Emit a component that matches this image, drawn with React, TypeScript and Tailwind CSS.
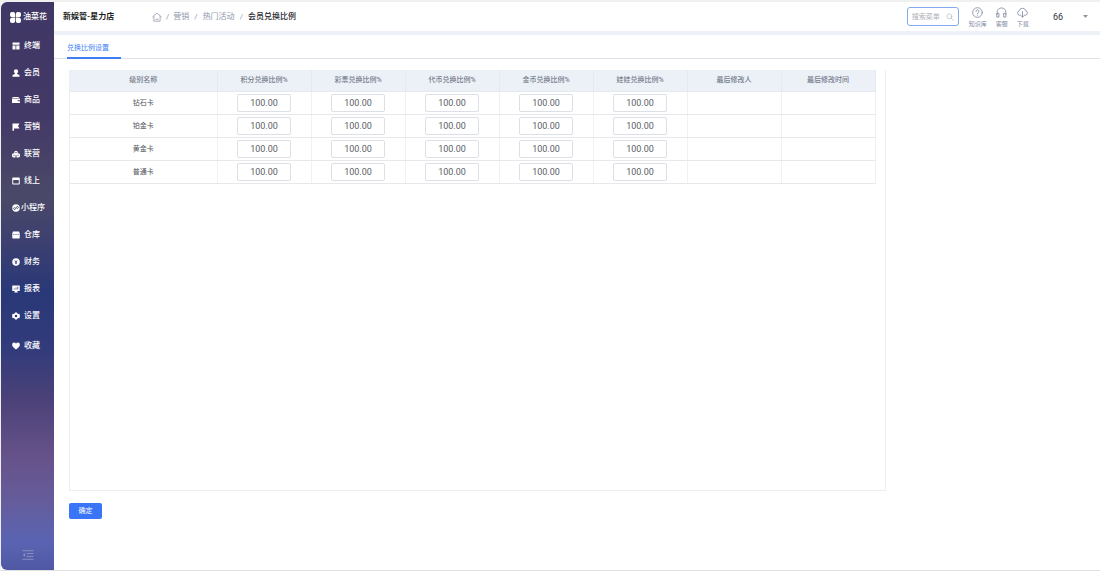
import React, { useState } from "react";

type IconProps = { className?: string };

const solid = (children: React.ReactNode) =>
  function SolidIcon({ className = "size-2 shrink-0" }: IconProps) {
    return (
      <svg viewBox="0 0 16 16" fill="currentColor" className={className} aria-hidden="true">
        {children}
      </svg>
    );
  };

const TerminalIcon = solid(<path d="M1 1h14v4.500H1zM1 7h6v8H1zM8.500 7H15v8H8.500z" />);
const MemberIcon = solid(
  <path d="M8 .5a4.200 4.200 0 0 1 4.200 4.200c0 1.800-.9 3.200-2 4v1.200L15 12v3.500H1V12l4.800-2.100V8.700c-1.100-.8-2-2.200-2-4A4.200 4.200 0 0 1 8 .5z" />
);
const GoodsIcon = solid(
  <path fillRule="evenodd" d="M1 2h12.500v2H1zM0 5h16v3h-4.500v2.500H16V14H0zM13 8.800h2v1h-2z" />
);
const FlagIcon = solid(<path d="M1 1h14l-3 5 3 5H4v4.500H1z" />);
const AllianceIcon = solid(
  <path fillRule="evenodd" d="M4.500 5a3.500 3.500 0 0 1 7 0v1.500h.5a4 4 0 0 1 0 8.500H9v-4.500H7V15H4a4 4 0 0 1 0-8.500h.5zM7 4v2.500h2V4zM3 9.500v2h2v-2zM11 9.500v2h2v-2z" />
);
const OnlineIcon = solid(
  <path fillRule="evenodd" d="M2 1h12a1.500 1.500 0 0 1 1.500 1.500v11A1.500 1.500 0 0 1 14 15H2a1.500 1.500 0 0 1-1.500-1.500v-11A1.500 1.500 0 0 1 2 1zM2.500 6v7h11V6z" />
);
const MiniAppIcon = solid(
  <>
    <circle cx="8" cy="8" r="7.500" />
    <path d="M6.500 8.300a2 2 0 1 0 1.500 2V5.700a2 2 0 1 1 1.500 2" fill="none" stroke="#4a4668" strokeWidth="1.500" transform="rotate(25 8 8)" />
  </>
);
const WarehouseIcon = solid(
  <path fillRule="evenodd" d="M2 1h12l1.500 4v8.500A1.500 1.500 0 0 1 14 15H2a1.500 1.500 0 0 1-1.500-1.500V5zM2.500 6v1.500H5V6zM6.800 6v1.500h2.400V6zM11 6v1.500h2.500V6z" />
);
const FinanceIcon = solid(
  <>
    <circle cx="8" cy="8" r="7.500" />
    <path d="m5.500 4.500 2.500 3 2.500-3M8 7.500V12M5.700 8h4.600M5.700 10h4.600" fill="none" stroke="#2f3876" strokeWidth="1.400" />
  </>
);
const ReportIcon = solid(
  <>
    <path d="M.5 1h15v11H10l2 3H4l2-3H.5z" />
    <path d="M4.500 9V7M8 9V5M11.500 9V3.500" stroke="#2a3878" strokeWidth="1.500" />
  </>
);
const SettingIcon = solid(
  <path fillRule="evenodd" d="M6 .8h4l.7 2 1.800 1 2.100-.4 1.400 3.500-1.100 1.100 1.100 1.200-1.400 3.400-2.100-.4-1.800 1-.7 2H6l-.7-2-1.800-1-2.100.4L0 9.200 1.100 8 0 6.900l1.400-3.500 2.100.4 1.800-1zM8 5.500a2.500 2.500 0 1 0 0 5 2.500 2.500 0 0 0 0-5z" />
);
const HeartIcon = solid(
  <path d="M8 15C3 11.200.3 8.600.3 5.300A4 4 0 0 1 4.400 1.200C6 1.200 7.200 2 8 3.300 8.800 2 10 1.200 11.600 1.200a4 4 0 0 1 4.100 4.100C15.700 8.600 13 11.200 8 15z" />
);

function LogoMark() {
  return (
    <svg viewBox="0 0 22 22" fill="#fff" className="size-[11px] shrink-0" aria-hidden="true">
      <path d="M4 0h2.500A4 4 0 0 1 10.300 4v6.300H4A4 4 0 0 1 0 6.500V4a4 4 0 0 1 4-4zM15.500 0H18a4 4 0 0 1 4 4v2.500a4 4 0 0 1-4 3.800h-6.300V4a4 4 0 0 1 3.800-4zM4 11.700h6.300V18a4 4 0 0 1-3.800 4H4a4 4 0 0 1-4-4v-2.500a4 4 0 0 1 4-3.800zM11.700 11.700H18a4 4 0 0 1 4 3.800V18a4 4 0 0 1-4 4h-2.500a4 4 0 0 1-3.800-4z" />
    </svg>
  );
}

function LineIcon({ className, children }: { className: string; children: React.ReactNode }) {
  return (
    <svg
      viewBox="0 0 24 24"
      fill="none"
      stroke="currentColor"
      strokeWidth="1.800"
      strokeLinecap="round"
      strokeLinejoin="round"
      className={className}
      aria-hidden="true"
    >
      {children}
    </svg>
  );
}

const menu = [
  { label: "终端", Icon: TerminalIcon },
  { label: "会员", Icon: MemberIcon },
  { label: "商品", Icon: GoodsIcon },
  { label: "营销", Icon: FlagIcon },
  { label: "联营", Icon: AllianceIcon },
  { label: "线上", Icon: OnlineIcon },
  { label: "小程序", Icon: MiniAppIcon, wide: true },
  { label: "仓库", Icon: WarehouseIcon },
  { label: "财务", Icon: FinanceIcon },
  { label: "报表", Icon: ReportIcon },
  { label: "设置", Icon: SettingIcon },
];

const rateColumns = ["积分兑换比例%", "彩票兑换比例%", "代币兑换比例%", "金币兑换比例%", "娃娃兑换比例%"];
const levels = ["钻石卡", "铂金卡", "黄金卡", "普通卡"];

function Sidebar() {
  return (
    <aside className="flex w-[53px] shrink-0 flex-col rounded-l-md bg-[linear-gradient(180deg,#3f3765_0%,#433967_20%,#4a4968_34%,#3d4070_42%,#293878_51%,#323b7b_61%,#4b4178_70%,#66528a_80%,#665b99_87%,#5a64b2_95%,#5058a4_100%)] text-[8px] leading-3 text-white">
      <a href="#" className="flex h-[30px] items-center gap-0.5 pl-[9px] font-medium">
        <LogoMark />
        <span className="whitespace-nowrap">油菜花</span>
      </a>
      <nav className="flex flex-col font-medium">
        {menu.map(({ label, Icon, wide }) => (
          <a
            key={label}
            href="#"
            className={wide ? "flex h-[27px] items-center gap-px pl-[11px] whitespace-nowrap" : "flex h-[27px] items-center gap-1 pl-[11px] whitespace-nowrap"}
          >
            <Icon />
            {label}
          </a>
        ))}
        <a href="#" className="mt-[3px] flex h-[27px] items-center gap-1 pl-[11px]">
          <HeartIcon />
          收藏
        </a>
      </nav>
      <button type="button" aria-label="收起菜单" className="mx-auto mt-auto mb-2.5 text-[#8f93c4]">
        <svg viewBox="0 0 24 20" fill="none" stroke="currentColor" strokeWidth="1.800" className="h-2.5 w-3">
          <path d="M1 1.500h22M9 7.200h14M9 12.800h14M1 18.500h22" />
          <path d="M6 6.500v7L1.500 10z" fill="currentColor" stroke="none" />
        </svg>
      </button>
    </aside>
  );
}

function Tool({ label, children }: { label: string; children: React.ReactNode }) {
  return (
    <button type="button" className="flex flex-col items-center whitespace-nowrap">
      {children}
      <span>{label}</span>
    </button>
  );
}

function Header() {
  return (
    <header className="flex h-[33px] shrink-0 items-center border-b-4 border-[#eef1f8] pl-[9px]">
      <h1 className="w-[89px] shrink-0 text-[8px] leading-3 font-bold whitespace-nowrap text-[#1c1e22]">新娱管-星力店</h1>
      <nav aria-label="面包屑" className="flex items-center gap-1 text-[8px] leading-3 whitespace-nowrap text-[#8f98ad]">
        <a href="#" aria-label="首页">
          <LineIcon className="size-2.5">
            <path d="M1.500 12 12 2.500 22.500 12M4.500 10v12h15V10M9 17.500h6" />
          </LineIcon>
        </a>
        <span>/</span>
        <a href="#">营销</a>
        <span className="px-px">/</span>
        <a href="#">热门活动</a>
        <span className="px-px">/</span>
        <span className="font-medium text-[#26292e]">会员兑换比例</span>
      </nav>
      <div className="ml-auto flex items-center pr-3">
        <label className="flex h-[19px] w-[52px] items-center rounded-[3px] border border-[#83aaf2] px-1 text-[#aab0bd]">
          <input
            type="text"
            aria-label="搜索菜单"
            placeholder="搜索菜单"
            className="w-full min-w-0 flex-1 bg-transparent text-[7px] leading-3 outline-none placeholder:text-[#aeb1b8]"
          />
          <LineIcon className="size-2 shrink-0">
            <circle cx="10" cy="10" r="7.500" />
            <path d="m15.500 15.500 6.500 6.500" />
          </LineIcon>
        </label>
        <div className="ml-2.5 flex gap-[9px] pt-1 text-[6px] leading-3 text-[#8089a3]">
          <Tool label="知识库">
            <LineIcon className="size-[11px]">
              <circle cx="12" cy="12" r="10.500" />
              <path d="M8.800 9.500a3.200 3.200 0 1 1 4.700 2.800c-1 .6-1.500 1.100-1.500 2.200M12 17.500v.3" />
            </LineIcon>
          </Tool>
          <Tool label="客服">
            <LineIcon className="size-[11px]">
              <path d="M2.500 16V11.500a9.500 9.500 0 0 1 19 0V16M2.500 14h4v8h-4zM17.500 14h4v8h-4z" />
            </LineIcon>
          </Tool>
          <Tool label="下载">
            <LineIcon className="size-[11px]">
              <path d="M7.500 18H6A5 5 0 0 1 5 8.200a7.200 7.200 0 0 1 14 0A5 5 0 0 1 18 18h-1.500M12 10v12M8.800 19l3.200 3 3.200-3" />
            </LineIcon>
          </Tool>
        </div>
        <button type="button" className="ml-6 flex items-center gap-5 text-[9px] leading-3 text-[#2f3238]">
          66
          <svg viewBox="0 0 10 6" fill="#8c94a6" className="h-[3px] w-[5px]" aria-hidden="true">
            <path d="M0 0h10L5 6z" />
          </svg>
        </button>
      </div>
    </header>
  );
}

function RateTable() {
  const [rates, setRates] = useState(() => levels.map(() => rateColumns.map(() => "100.00")));

  const update = (row: number, col: number, value: string) =>
    setRates((prev) => prev.map((r, i) => (i === row ? r.map((v, j) => (j === col ? value : v)) : r)));

  return (
    <table className="w-full table-fixed border-collapse text-center text-[7px] leading-3">
      <thead>
        <tr className="h-[21px] bg-[#ecf0f7] text-[#747c8b]">
          <th className="w-[147px] border-r border-b border-[#e6e9f0] p-0 font-medium">级别名称</th>
          {[...rateColumns, "最后修改人", "最后修改时间"].map((name) => (
            <th key={name} className="border-r border-b border-[#e6e9f0] p-0 font-medium">
              {name}
            </th>
          ))}
        </tr>
      </thead>
      <tbody className="text-[#4f535a]">
        {levels.map((level, row) => (
          <tr key={level} className="h-[23px]">
            <td className="border-r border-b border-r-[#f0f1f4] border-b-[#e6e8ec] p-0">{level}</td>
            {rateColumns.map((name, col) => (
              <td key={name} className="border-r border-b border-r-[#f0f1f4] border-b-[#e6e8ec] p-0">
                <input
                  type="text"
                  inputMode="decimal"
                  aria-label={`${level} ${name}`}
                  value={rates[row][col]}
                  onChange={(e) => update(row, col, e.target.value)}
                  className="mx-auto block h-[18px] w-[54px] rounded-xs border border-[#dcdfe5] text-center text-[9px] leading-3 text-[#5b5f66] outline-none focus:border-[#3878f8]"
                />
              </td>
            ))}
            <td className="border-r border-b border-r-[#f0f1f4] border-b-[#e6e8ec] p-0" />
            <td className="border-r border-b border-r-[#f0f1f4] border-b-[#e6e8ec] p-0" />
          </tr>
        ))}
      </tbody>
    </table>
  );
}

export default function App() {
  return (
    <div className="flex min-h-screen border-t-2 border-b border-l border-t-[#f0f0f1] border-b-[#dedfe1] border-l-[#eeeef0] bg-white font-[Roboto,'Noto_Sans_CJK_SC',sans-serif]">
      <Sidebar />
      <div className="flex min-w-0 flex-1 flex-col">
        <Header />
        <div role="tablist" className="flex h-6 shrink-0 border-b border-[#dfe2e8] pl-[13px]">
          <button
            type="button"
            role="tab"
            aria-selected="true"
            className="-mb-px border-b-2 border-[#3f7ff5] pt-1 pr-3 text-[7px] leading-3 text-[#3f7ff5]"
          >
            兑换比例设置
          </button>
        </div>
        <main className="flex flex-1 flex-col items-start pt-[11px] pb-[51px] pl-[15px]">
          <div className="w-[79.2%] flex-1 border border-t-0 border-[#eceef2] pr-[9px]">
            <RateTable />
          </div>
          <button type="submit" className="mt-3 h-4 w-[33px] rounded-xs bg-[#3a74f7] text-[7px] leading-3 text-white">
            确定
          </button>
        </main>
      </div>
    </div>
  );
}
